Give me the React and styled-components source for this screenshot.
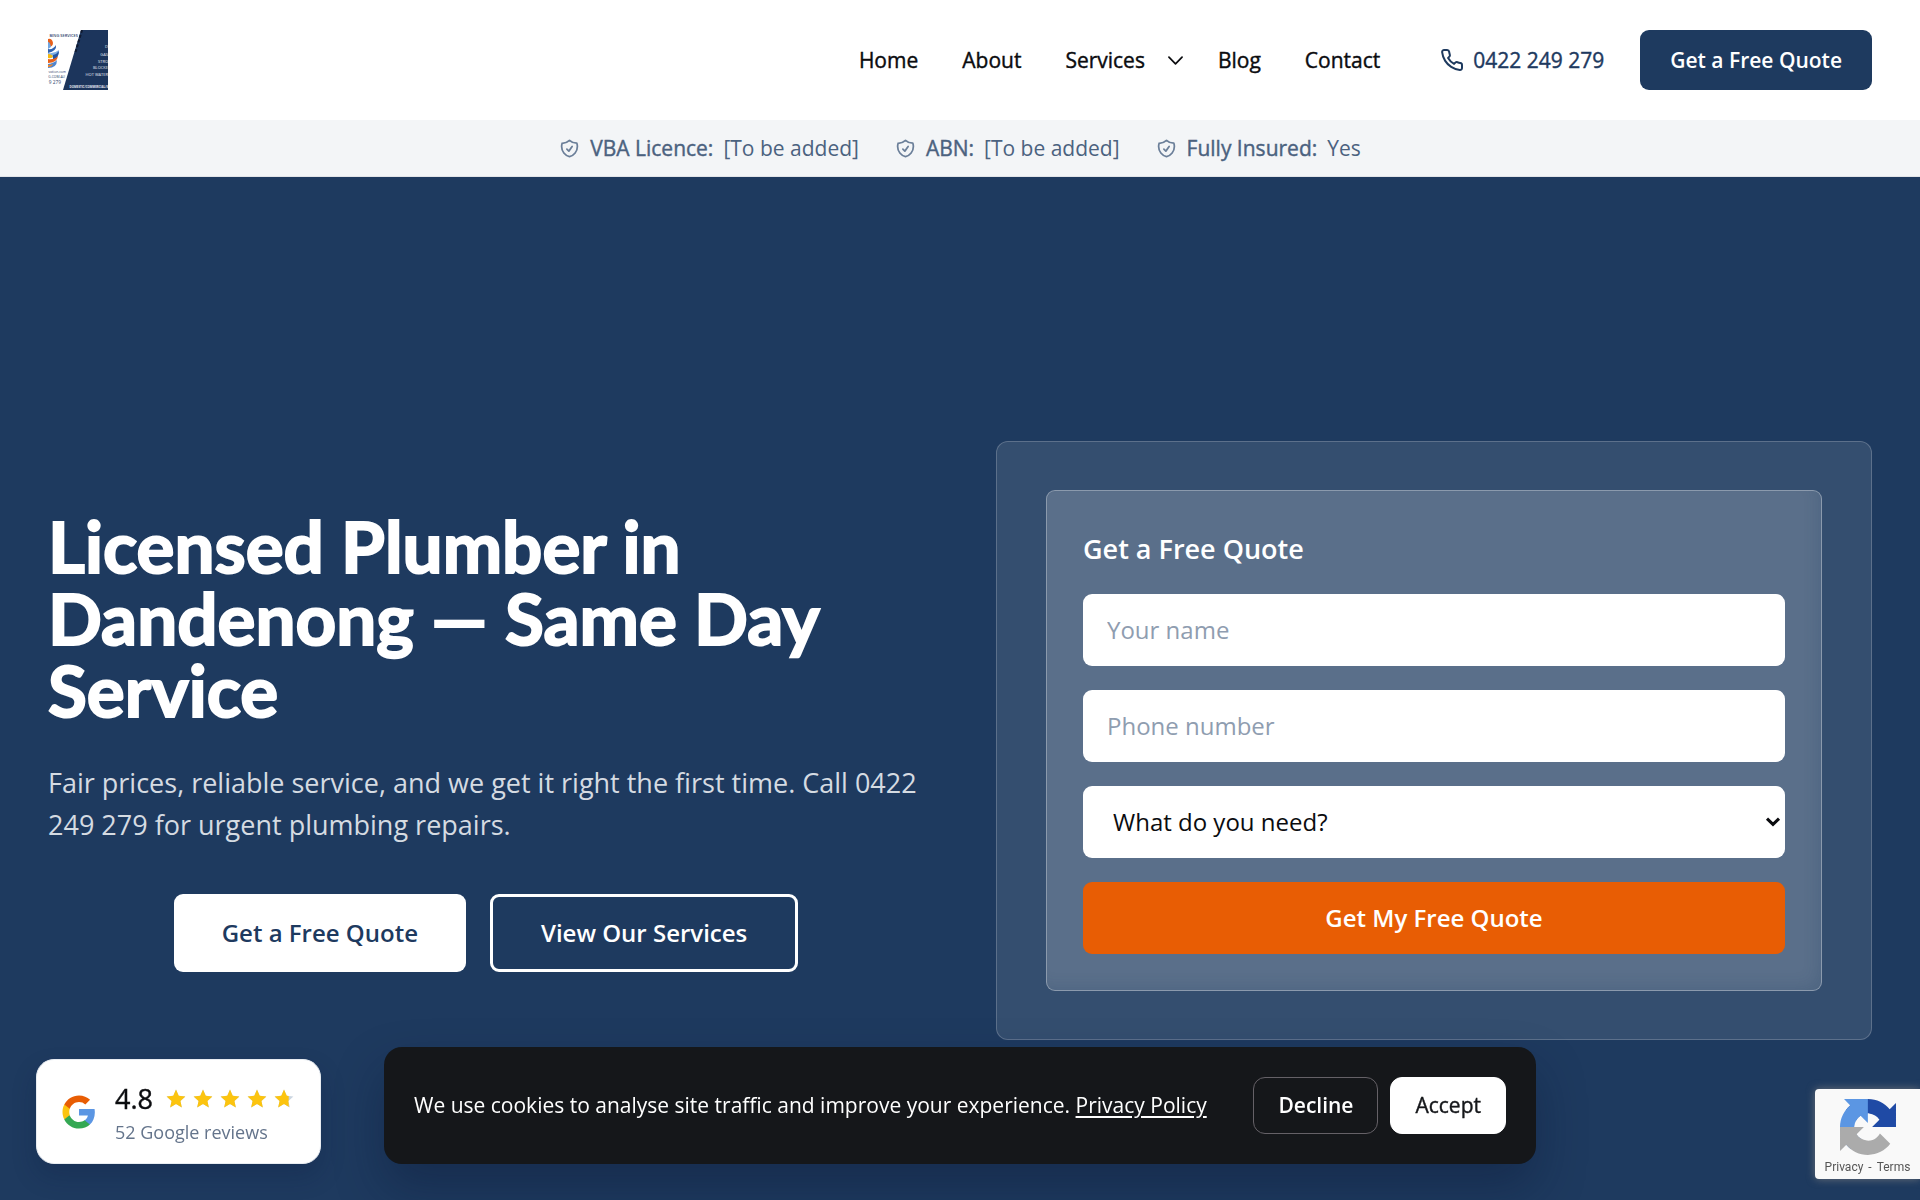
import React from "react";
import styled, { createGlobalStyle } from "styled-components";

const navy = "#1e3a5f";
const ink = "#15171a";
const orange = "#e85d04";

const GlobalStyle = createGlobalStyle`
  *, *::before, *::after { box-sizing: border-box; }
  body {
    margin: 0;
    background: #fff;
    color: #0b0c0f;
    font-family: "Open Sans", "Noto Sans", sans-serif;
    font-size: 24px;
    line-height: 36px;
  }
  button, input, select { font: inherit; color: inherit; }
  a { color: inherit; text-decoration: none; }
  svg { display: block; flex: none; }
  h1, h2, p { margin: 0; }
`;

const Page = styled.div`
  display: flex;
  flex-direction: column;
  min-height: 100vh;
`;

const Header = styled.header`
  display: flex;
  align-items: center;
  justify-content: space-between;
  padding: 30px 48px;
  background: #fff;
  font-size: 21px;
  line-height: 30px;
  font-weight: 500;
`;

const HeaderRight = styled.div`
  display: flex;
  align-items: center;
  gap: 36px;
`;

const Nav = styled.nav`
  display: flex;
  align-items: center;
  gap: 8px;
  -webkit-text-stroke: 0.4px currentColor;
`;

const NavLink = styled.a`
  padding: 6px 18px;
`;

const SubmenuToggle = styled.button`
  display: flex;
  padding: 6px;
  margin-left: -4px;
  border: 0;
  background: none;
`;

const NavGroup = styled.div`
  display: flex;
  align-items: center;
`;

const PhoneLink = styled.a`
  display: flex;
  align-items: center;
  gap: 9px;
  padding-left: 6px;
  color: ${navy};
  -webkit-text-stroke: 0.4px currentColor;
`;

const HeaderCta = styled.a`
  padding: 15px 30px;
  border-radius: 9px;
  background: ${navy};
  color: #fff;
  font-weight: 600;
`;

const TrustBar = styled.ul`
  display: flex;
  justify-content: center;
  gap: 36px;
  margin: 0;
  padding: 13px 48px;
  list-style: none;
  border-bottom: 1px solid #e2e4e8;
  background: #f3f5f7;
  color: #4b627f;
  font-size: 21px;
  line-height: 30px;
`;

const TrustItem = styled.li`
  display: flex;
  align-items: center;
  gap: 10px;
`;

const TrustLabel = styled.span`
  font-weight: 500;
  -webkit-text-stroke: 0.4px currentColor;
`;

const Hero = styled.main`
  flex: 1;
  display: grid;
  grid-template-columns: minmax(0, 1fr) minmax(0, 1fr);
  gap: 72px;
  align-items: center;
  align-content: start;
  padding: 264px 48px 160px;
  background: ${navy};
`;

const Intro = styled.div`
  display: flex;
  flex-direction: column;
`;

const Title = styled.h1`
  color: #fff;
  font-family: Lato, "Open Sans", sans-serif;
  font-size: 71px;
  line-height: 72px;
  font-weight: 700;
  -webkit-text-stroke: 2px currentColor;
`;

const Lead = styled.p`
  margin-top: 36px;
  color: #d5dbe2;
  font-size: 27px;
  line-height: 42px;
`;

const Actions = styled.div`
  display: flex;
  justify-content: center;
  gap: 24px;
  margin-top: 48px;
`;

const HeroButton = styled.a`
  display: flex;
  align-items: center;
  padding: 18px 48px;
  border: ${(p) => (p.$outline ? "3px solid #fff" : "0")};
  border-radius: 9px;
  background: ${(p) => (p.$outline ? "transparent" : "#fff")};
  color: ${(p) => (p.$outline ? "#fff" : navy)};
  font-weight: 600;
`;

const Glass = styled.section`
  padding: 48px 49px;
  border: 1px solid rgba(255, 255, 255, 0.2);
  border-radius: 12px;
  background: rgba(255, 255, 255, 0.1);
`;

const QuoteForm = styled.form`
  display: flex;
  flex-direction: column;
  gap: 24px;
  padding: 36px;
  border: 1px solid rgba(255, 255, 255, 0.3);
  border-radius: 9px;
  background: rgba(255, 255, 255, 0.19);
  box-shadow: inset -8px -8px 16px -6px rgba(30, 58, 95, 0.2);
`;

const FormTitle = styled.h2`
  color: #fff;
  font-size: 27px;
  line-height: 43px;
  font-weight: 600;
`;

const Field = styled.input`
  width: 100%;
  height: 72px;
  padding: 0 24px 2px;
  border: 0;
  border-radius: 9px;
  background: #fff;
  &::placeholder { color: #8f9db0; opacity: 1; }
`;

const PickerWrap = styled.div`
  display: grid;
  align-items: center;
  & > * { grid-area: 1 / 1; }
  & > svg { justify-self: end; margin-right: 4px; pointer-events: none; }
`;

const Picker = styled.select`
  appearance: none;
  width: 100%;
  height: 72px;
  padding: 0 30px;
  border: 0;
  border-radius: 9px;
  background: #fff;
`;

const Submit = styled.button`
  height: 72px;
  border: 0;
  border-radius: 9px;
  background: ${orange};
  color: #fff;
  font-weight: 600;
`;

const Reviews = styled.a`
  position: fixed;
  left: 36px;
  bottom: 36px;
  display: flex;
  align-items: center;
  gap: 18px;
  padding: 18px 24px;
  border: 1px solid #e8ecf1;
  border-radius: 18px;
  background: #fff;
  box-shadow: 0 12px 24px rgba(10, 25, 60, 0.22);
`;

const Score = styled.div`
  display: flex;
  align-items: center;
  gap: 11px;
  font-size: 27px;
  line-height: 42px;
  font-weight: 500;
  -webkit-text-stroke: 0.4px currentColor;
`;

const Stars = styled.div`
  display: flex;
  gap: 3px;
`;

const ReviewCount = styled.div`
  color: #64748b;
  font-size: 18px;
  line-height: 25px;
`;

const Cookies = styled.aside`
  position: fixed;
  left: 0;
  right: 0;
  bottom: 36px;
  display: flex;
  align-items: center;
  justify-content: space-between;
  width: 60%;
  margin: 0 auto;
  padding: 30px;
  border-radius: 18px;
  background: ${ink};
  color: #fff;
  font-size: 21px;
  line-height: 31px;
  box-shadow: 0 24px 48px rgba(10, 20, 50, 0.35);
`;

const PolicyLink = styled.a`
  text-decoration: underline;
  text-underline-offset: 3px;
`;

const CookieActions = styled.div`
  display: flex;
  gap: 12px;
`;

const CookieButton = styled.button`
  padding: 12px 24px;
  border: 1px solid ${(p) => (p.$solid ? "#fff" : "#656167")};
  border-radius: 12px;
  background: ${(p) => (p.$solid ? "#fff" : "transparent")};
  color: ${(p) => (p.$solid ? ink : "#fff")};
  font-weight: ${(p) => (p.$solid ? 500 : 600)};
  -webkit-text-stroke: ${(p) => (p.$solid ? "0.4px currentColor" : "0")};
`;

const Captcha = styled.div`
  position: fixed;
  right: 0;
  bottom: 21px;
  display: flex;
  flex-direction: column;
  align-items: center;
  justify-content: space-between;
  width: 105px;
  height: 90px;
  padding: 10px 0 3px;
  border-radius: 4px 0 0 4px;
  background: #f9f9f9;
  box-shadow: 0 0 8px rgba(128, 128, 128, 0.8);
  color: #555;
  font-family: Roboto, sans-serif;
  font-size: 12px;
  line-height: 18px;
`;

const CaptchaLinks = styled.div`
  display: flex;
  gap: 5px;
`;

const Stroke = ({ size, d, color = "currentColor", width = 2 }) => (
  <svg width={size} height={size} viewBox="0 0 24 24" fill="none" stroke={color}
    strokeWidth={width} strokeLinecap="round" strokeLinejoin="round" aria-hidden="true">
    <path d={d} />
  </svg>
);

const phonePath =
  "M22 16.92v3a2 2 0 0 1-2.18 2 19.79 19.79 0 0 1-8.63-3.07 19.5 19.5 0 0 1-6-6 19.79 19.79 0 0 1-3.07-8.67A2 2 0 0 1 4.11 2h3a2 2 0 0 1 2 1.72 12.84 12.84 0 0 0 .7 2.81 2 2 0 0 1-.45 2.11L8.09 9.91a16 16 0 0 0 6 6l1.27-1.27a2 2 0 0 1 2.11-.45 12.84 12.84 0 0 0 2.81.7A2 2 0 0 1 22 16.92z";
const shieldPath =
  "M9 12.75 11.25 15 15 9.75m-3-7.036A11.959 11.959 0 0 1 3.598 6 11.99 11.99 0 0 0 3 9.749c0 5.592 3.824 10.29 9 11.623 5.176-1.332 9-6.03 9-11.622 0-1.31-.21-2.571-.598-3.751h-.152c-3.196 0-6.1-1.248-8.25-3.285Z";
const chevronPath = "m19.5 8.25-7.5 7.5-7.5-7.5";
const starPath =
  "M12 2.6l2.75 6.1 6.65.7-4.95 4.5 1.4 6.55L12 17.1l-5.85 3.35 1.4-6.55L2.6 9.4l6.65-.7z";

const Logo = () => (
  <svg width="60" height="60" viewBox="0 0 60 60" role="img" aria-label="Plumbing services">
    <rect width="60" height="60" fill="#fff" />
    <path d="M33 0H60V60H15Z" fill="#1c355c" />
    <path d="M34 0 27 24" stroke="#101a30" strokeWidth="2" strokeDasharray="3 2" />
    <path d="M0 9q4-1 5 4 0 4-5 4z" fill="#e8601a" />
    <path d="M0 12q2 0 3 5l-3 2z" fill="#6fa5e0" />
    <path d="M0 19q5 1 8-4 1 6-8 8z" fill="#2f62b0" />
    <path d="M0 23q6 1 11-3 0 8-11 8z" fill="#7fb0e4" />
    <path d="M5 25q4-1 6-4 0 7-6 9z" fill="#2456a4" />
    <path d="M0 24q3 0 5 2-1 3-5 2z" fill="#f6b90e" />
    <path d="M0 29q6 1 10-3-1 7-10 7z" fill="#e8601a" />
    <path d="M0 34q6-1 9-4 0 8-9 8z" fill="#4f86cf" />
    <path d="M0 35q3 0 5-1-1 3-5 3z" fill="#f08a2c" />
    <g fontFamily="Open Sans, sans-serif" fill="#2b426b" textAnchor="end">
      <text x="30" y="7" fontSize="4" fontWeight="600">BING SERVICES</text>
      <text x="18" y="43" fontSize="3.4">vation.com</text>
      <text x="17" y="48" fontSize="3.4">G.COM.AU</text>
      <text x="13" y="54" fontSize="4.8">9 279</text>
    </g>
    <g fontFamily="Open Sans, sans-serif" fill="#e3e9f2" fontSize="4" textAnchor="end">
      <text x="60" y="18">D</text>
      <text x="60" y="26">GAS</text>
      <text x="60" y="33">STRO</text>
      <text x="60" y="39">BLOCKE</text>
      <text x="60" y="46">HOT WATER</text>
      <text x="60" y="58" fontSize="2.9" fontWeight="700">DOMESTIC/COMMERCIAL/S</text>
    </g>
  </svg>
);

const GoogleMark = () => (
  <svg width="36" height="36" viewBox="0 0 24 24" aria-hidden="true">
    <path fill="#5b96e3" d="M22.56 12.25c0-.78-.07-1.53-.2-2.25H12v4.26h5.92c-.26 1.37-1.04 2.53-2.21 3.31v2.77h3.57c2.08-1.92 3.28-4.74 3.28-8.09z" />
    <path fill="#34a853" d="M12 23c2.97 0 5.46-.98 7.28-2.66l-3.57-2.77c-.98.66-2.23 1.06-3.71 1.06-2.86 0-5.29-1.93-6.16-4.53H2.18v2.84C3.99 20.53 7.7 23 12 23z" />
    <path fill="#fcc40f" d="M5.84 14.09c-.22-.66-.35-1.36-.35-2.09s.13-1.43.35-2.09V7.07H2.18C1.43 8.55 1 10.22 1 12s.43 3.45 1.18 4.93l2.85-2.22.81-.62z" />
    <path fill={orange} d="M12 5.38c1.62 0 3.06.56 4.21 1.64l3.15-3.15C17.45 2.09 14.97 1 12 1 7.7 1 3.99 3.47 2.18 7.07l3.66 2.84c.87-2.6 3.3-4.53 6.16-4.53z" />
  </svg>
);

const Star = ({ fill = 1 }) => (
  <svg width="24" height="24" viewBox="0 0 24 24" aria-hidden="true">
    <defs>
      <clipPath id={`star-${fill * 100}`}>
        <rect width={2.6 + 18.8 * fill} height="24" />
      </clipPath>
    </defs>
    <path d={starPath} fill="#cbd5e1" stroke="none" />
    <path d={starPath} fill="#fcc40f" clipPath={`url(#star-${fill * 100})`} />
  </svg>
);

const CaptchaMark = () => (
  <svg width="56" height="56" viewBox="0 0 64 64" aria-hidden="true">
    <path fill="#1f4aa5" d="M64 31.955l-.033-1.37V4.687l-7.16 7.16C50.948 4.674 42.033.093 32.05.093c-10.4 0-19.622 4.96-25.458 12.64l11.736 11.86a15.55 15.55 0 0 1 4.754-5.334c2.05-1.6 4.952-2.906 8.968-2.906.485 0 .86.057 1.135.163 4.976.393 9.288 3.14 11.828 7.124l-8.307 8.307L64 31.953" />
    <path fill="#5b96e3" d="M31.862.094l-1.37.033H4.594l7.16 7.16C4.58 13.147 0 22.06 0 32.046c0 10.4 4.96 19.622 12.64 25.458L24.5 45.768a15.55 15.55 0 0 1-5.334-4.754c-1.6-2.05-2.906-4.952-2.906-8.968 0-.485.057-.86.163-1.135.393-4.976 3.14-9.288 7.124-11.828l8.307 8.307L31.86.095" />
    <path fill="#ababab" d="M.001 32.045l.033 1.37v25.898l7.16-7.16c5.86 7.173 14.774 11.754 24.76 11.754 10.4 0 19.622-4.96 25.458-12.64l-11.736-11.86a15.55 15.55 0 0 1-4.754 5.334c-2.05 1.6-4.952 2.906-8.968 2.906-.485 0-.86-.057-1.135-.163-4.976-.393-9.288-3.14-11.828-7.124l8.307-8.307c-10.522.04-22.4.066-27.295-.005" />
  </svg>
);

const credentials = [
  ["VBA Licence:", "[To be added]"],
  ["ABN:", "[To be added]"],
  ["Fully Insured:", "Yes"],
];

export default function App() {
  return (
    <Page>
      <GlobalStyle />
      <Header>
        <a href="#home"><Logo /></a>
        <HeaderRight>
          <Nav>
            <NavLink href="#home">Home</NavLink>
            <NavLink href="#about">About</NavLink>
            <NavGroup>
              <NavLink href="#services">Services</NavLink>
              <SubmenuToggle type="button" aria-label="Show services">
                <Stroke size={21} d={chevronPath} />
              </SubmenuToggle>
            </NavGroup>
            <NavLink href="#blog">Blog</NavLink>
            <NavLink href="#contact">Contact</NavLink>
          </Nav>
          <PhoneLink href="tel:0422249279">
            <Stroke size={24} d={phonePath} />
            0422 249 279
          </PhoneLink>
          <HeaderCta href="#quote">Get a Free Quote</HeaderCta>
        </HeaderRight>
      </Header>

      <TrustBar>
        {credentials.map(([label, value]) => (
          <TrustItem key={label}>
            <Stroke size={21} d={shieldPath} color="#6b7f99" />
            <TrustLabel>{label}</TrustLabel>
            <span>{value}</span>
          </TrustItem>
        ))}
      </TrustBar>

      <Hero>
        <Intro>
          <Title>Licensed Plumber in Dandenong — Same Day Service</Title>
          <Lead>
            Fair prices, reliable service, and we get it right the first time. Call 0422 249 279
            for urgent plumbing repairs.
          </Lead>
          <Actions>
            <HeroButton href="#quote">Get a Free Quote</HeroButton>
            <HeroButton href="#services" $outline>View Our Services</HeroButton>
          </Actions>
        </Intro>
        <Glass>
          <QuoteForm id="quote" onSubmit={(e) => e.preventDefault()}>
            <FormTitle>Get a Free Quote</FormTitle>
            <Field type="text" placeholder="Your name" aria-label="Your name" />
            <Field type="tel" placeholder="Phone number" aria-label="Phone number" />
            <PickerWrap>
              <Picker aria-label="What do you need?" defaultValue="">
                <option value="">What do you need?</option>
              </Picker>
              <svg width="16" height="12" viewBox="0 0 16 12" aria-hidden="true">
                <path d="M2 2.6 8 8.4 14 2.6" fill="none" stroke="#0b0c0f" strokeWidth="3" />
              </svg>
            </PickerWrap>
            <Submit type="submit">Get My Free Quote</Submit>
          </QuoteForm>
        </Glass>
      </Hero>

      <Reviews href="#reviews">
        <GoogleMark />
        <div>
          <Score>
            4.8
            <Stars>
              <Star /><Star /><Star /><Star /><Star fill={0.75} />
            </Stars>
          </Score>
          <ReviewCount>52 Google reviews</ReviewCount>
        </div>
      </Reviews>

      <Cookies>
        <p>
          We use cookies to analyse site traffic and improve your experience.{" "}
          <PolicyLink href="#privacy">Privacy Policy</PolicyLink>
        </p>
        <CookieActions>
          <CookieButton type="button">Decline</CookieButton>
          <CookieButton type="button" $solid>Accept</CookieButton>
        </CookieActions>
      </Cookies>

      <Captcha>
        <CaptchaMark />
        <CaptchaLinks>
          <a href="#captcha-privacy">Privacy</a>
          <span>-</span>
          <a href="#captcha-terms">Terms</a>
        </CaptchaLinks>
      </Captcha>
    </Page>
  );
}
